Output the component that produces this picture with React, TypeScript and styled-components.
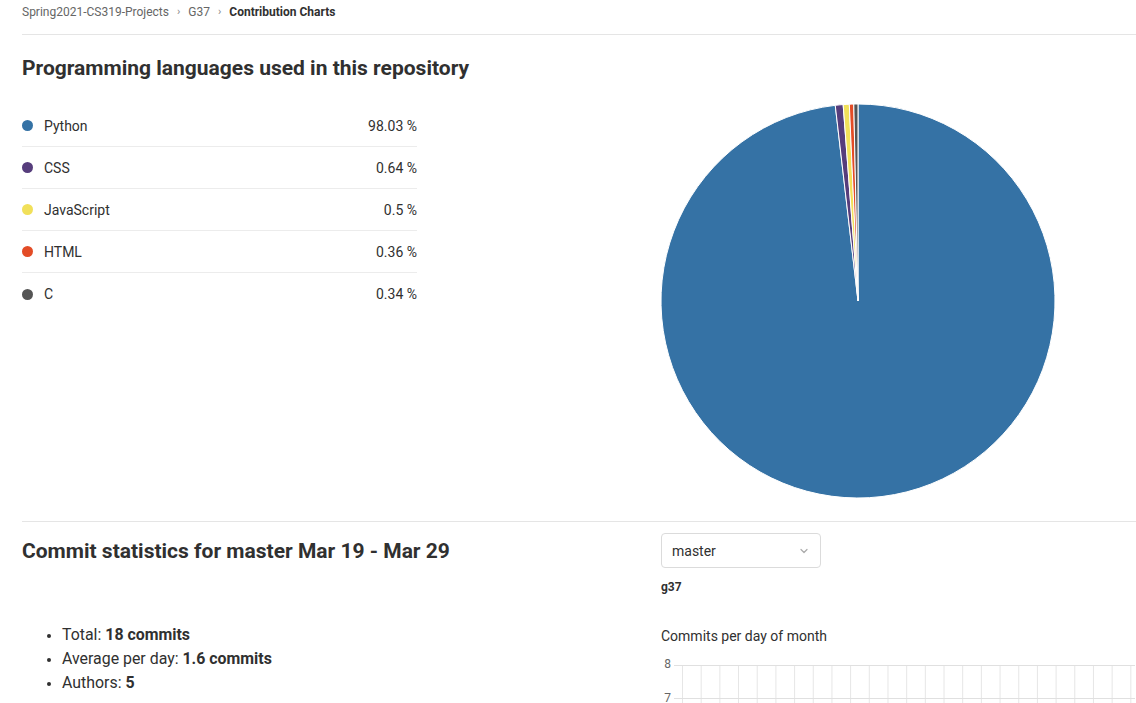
import React from "react";
import styled, { createGlobalStyle } from "styled-components";

const Global = createGlobalStyle`
  html, body { margin: 0; padding: 0; background: #fff; overflow: hidden; }
  body { font-family: Roboto, "Noto Sans", "Liberation Sans", sans-serif; color: #303030; }
  * { box-sizing: border-box; }
`;

const Page = styled.div`
  padding: 0 0 0 22px;
  width: 1136px;
  height: 703px;
  overflow: hidden;
`;

const Breadcrumbs = styled.nav`
  display: flex;
  align-items: center;
  height: 35px;
  padding-bottom: 11px;
  border-bottom: 1px solid #e5e5e5;
  font-size: 12px;
  color: #666;
`;

const Crumb = styled.span<{ $current?: boolean }>`
  color: ${(p) => (p.$current ? "#303030" : "#666")};
  font-weight: ${(p) => (p.$current ? 700 : 400)};
`;

const Sep = styled.span`
  margin: 0 8px;
  color: #888;
  font-size: 11px;
`;

const Heading = styled.h2`
  margin: 0;
  font-size: 21px;
  line-height: 24px;
  font-weight: 700;
  color: #303030;
  white-space: nowrap;
`;

const Section = styled.section`
  display: grid;
  grid-template-columns: 619px 1fr;
  column-gap: 20px;
  align-items: start;
`;

const TopLeft = styled.div`
  padding-top: 21px;
`;

const LangList = styled.ul`
  list-style: none;
  margin: 25px 0 0;
  padding: 0;
  width: 395px;
`;

const LangRow = styled.li`
  display: flex;
  align-items: center;
  height: 42px;
  font-size: 14px;
  color: #303030;
  border-bottom: 1px solid #ececec;
  &:last-child { border-bottom: none; }
`;

const Dot = styled.span<{ $color: string }>`
  width: 11px;
  height: 11px;
  border-radius: 50%;
  background: ${(p) => p.$color};
  margin-right: 11px;
  flex: none;
`;

const LangName = styled.span`
  flex: 1;
`;

const Pct = styled.span`
  text-align: right;
`;

const PieWrap = styled.div`
  padding-top: 69px;
  line-height: 0;
`;

const Divider = styled.hr`
  margin: 23px 0 0;
  border: none;
  border-top: 1px solid #e5e5e5;
`;

const StatsLeft = styled.div`
  padding-top: 17px;
`;

const StatsList = styled.ul`
  margin: 60px 0 0;
  padding-left: 40px;
  font-size: 15.9px;
  line-height: 24px;
  color: #303030;
  li::marker { font-size: 14px; }
`;

const StatsRight = styled.div`
  padding-top: 11px;
`;

const Select = styled.div`
  width: 160px;
  height: 35px;
  border: 1px solid #dbdbdb;
  border-radius: 4px;
  display: flex;
  align-items: center;
  justify-content: space-between;
  padding: 0 10px 0 10px;
  font-size: 14px;
  color: #303030;
`;

const Author = styled.div`
  margin-top: 11px;
  font-size: 12px;
  font-weight: 700;
  line-height: 16px;
`;

const ChartTitle = styled.div`
  margin-top: 32px;
  font-size: 14px;
  line-height: 18px;
  color: #303030;
`;

const ChartBox = styled.div`
  margin-top: 6px;
  margin-left: -1px;
`;

const langs = [
  { name: "Python", pct: 98.03, color: "#3572A5" },
  { name: "CSS", pct: 0.64, color: "#563d7c" },
  { name: "JavaScript", pct: 0.5, color: "#f1e05a" },
  { name: "HTML", pct: 0.36, color: "#e34c26" },
  { name: "C", pct: 0.34, color: "#555555" },
];

function Pie() {
  const r = 197;
  const cx = 197;
  const cy = 197;
  const total = langs.reduce((a, l) => a + l.pct, 0);
  let acc = 0;
  const paths = langs.map((l) => {
    const a0 = (acc / total) * Math.PI * 2;
    acc += l.pct;
    const a1 = (acc / total) * Math.PI * 2;
    const x0 = cx + r * Math.sin(a0);
    const y0 = cy - r * Math.cos(a0);
    const x1 = cx + r * Math.sin(a1);
    const y1 = cy - r * Math.cos(a1);
    const large = a1 - a0 > Math.PI ? 1 : 0;
    return (
      <path
        key={l.name}
        d={`M${cx},${cy} L${x0},${y0} A${r},${r} 0 ${large} 1 ${x1},${y1} Z`}
        fill={l.color}
        stroke="#fff"
        strokeWidth={1}
      />
    );
  });
  return (
    <svg width={394} height={394} viewBox="0 0 394 394">
      {paths}
    </svg>
  );
}

function Chevron() {
  return (
    <svg width="12" height="12" viewBox="0 0 16 16">
      <path d="M4 6l4 4 4-4" fill="none" stroke="#aaa" strokeWidth="1.6" strokeLinecap="round" strokeLinejoin="round" />
    </svg>
  );
}

function Grid() {
  const x0 = 22.5;
  const step = 18.68;
  const lines = [];
  for (let i = 0; i < 26; i++) {
    const x = x0 + i * step;
    lines.push(<line key={i} x1={x} y1={14} x2={x} y2={60} stroke="#e6e6e6" strokeWidth={1} />);
  }
  return (
    <svg width={475} height={60} viewBox="0 0 475 60" style={{ display: "block" }}>
      {lines}
      <line x1={14} y1={14.5} x2={475} y2={14.5} stroke="#e0e0e0" />
      <line x1={14} y1={47.5} x2={475} y2={47.5} stroke="#e0e0e0" />
      <text x={11} y={17} textAnchor="end" fontSize="12" fill="#666" fontFamily="Roboto, sans-serif">8</text>
      <text x={11} y={51} textAnchor="end" fontSize="12" fill="#666" fontFamily="Roboto, sans-serif">7</text>
    </svg>
  );
}

export default function App() {
  return (
    <Page>
      <Global />
      <Breadcrumbs>
        <Crumb>Spring2021-CS319-Projects</Crumb>
        <Sep>›</Sep>
        <Crumb>G37</Crumb>
        <Sep>›</Sep>
        <Crumb $current>Contribution Charts</Crumb>
      </Breadcrumbs>
      <Section>
        <TopLeft>
          <Heading>Programming languages used in this repository</Heading>
          <LangList>
            {langs.map((l) => (
              <LangRow key={l.name}>
                <Dot $color={l.color} />
                <LangName>{l.name}</LangName>
                <Pct>{l.pct} %</Pct>
              </LangRow>
            ))}
          </LangList>
        </TopLeft>
        <PieWrap>
          <Pie />
        </PieWrap>
      </Section>
      <Divider />
      <Section>
        <StatsLeft>
          <Heading>Commit statistics for master Mar 19 - Mar 29</Heading>
          <StatsList>
            <li>Total: <b>18 commits</b></li>
            <li>Average per day: <b>1.6 commits</b></li>
            <li>Authors: <b>5</b></li>
          </StatsList>
        </StatsLeft>
        <StatsRight>
          <Select>
            <span>master</span>
            <Chevron />
          </Select>
          <Author>g37</Author>
          <ChartTitle>Commits per day of month</ChartTitle>
          <ChartBox>
            <Grid />
          </ChartBox>
        </StatsRight>
      </Section>
    </Page>
  );
}
